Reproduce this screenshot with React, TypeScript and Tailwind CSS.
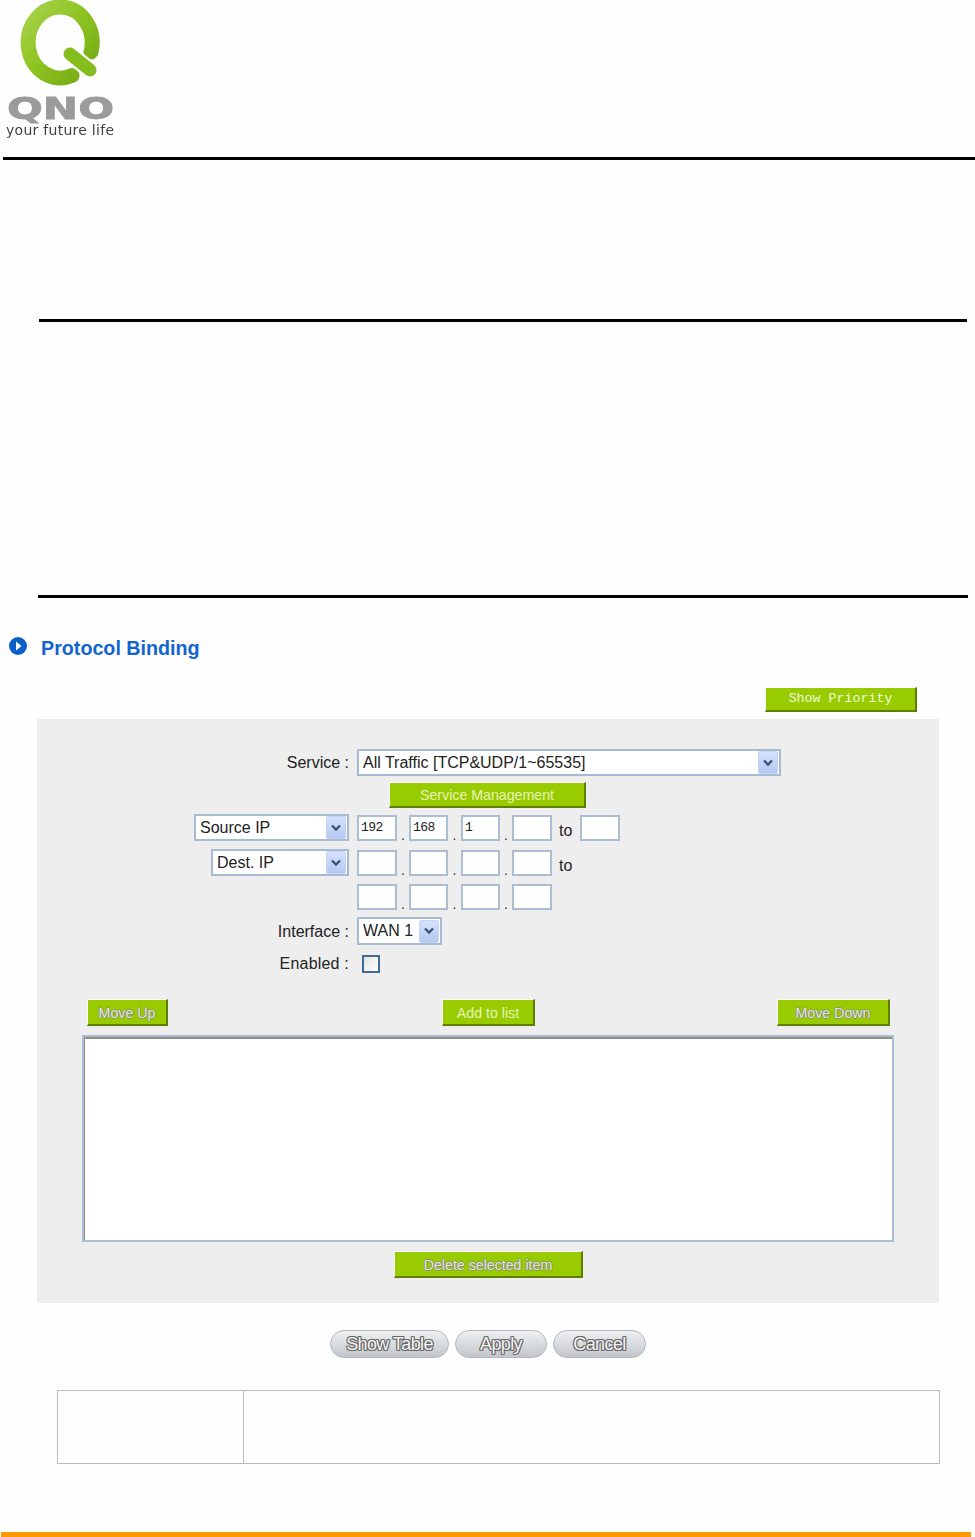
import React from "react";

const sans = "font-['Liberation_Sans',Arial,sans-serif]";

function Chevron({ className }: { className: string }) {
  return (
    <span
      className={`flex items-center justify-center rounded-[2px] border border-[#c4d4f4] bg-gradient-to-b from-[#d6e2fb] to-[#b4c8f2] ${className}`}
    >
      <svg width="12" height="8" viewBox="0 0 12 8" fill="none">
        <path d="M2 1.5 L6 5.5 L10 1.5" stroke="#3d5378" strokeWidth="2.4" />
      </svg>
    </span>
  );
}

function Select({ text, className }: { text: string; className: string }) {
  return (
    <div
      className={`flex items-center justify-between border-2 border-[#a6bad2] bg-white pl-[4px] pr-[1px] text-[16px] text-[#222] ${className}`}
    >
      <span className="whitespace-nowrap">{text}</span>
      <Chevron className="h-[23px] w-[20px]" />
    </div>
  );
}

function Box({ value = "", className = "w-[40px]" }: { value?: string; className?: string }) {
  return (
    <div
      className={`flex h-[26px] items-center border-2 border-[#a9bdd3] bg-white pl-[2px] font-['Liberation_Mono',monospace] text-[13px] tracking-[-0.5px] text-[#222] ${className}`}
    >
      {value}
    </div>
  );
}

function Dot({ className = "w-[12px]" }: { className?: string }) {
  return <span className={`h-[26px] pt-[11px] text-center text-[14px] leading-[18px] text-[#333] ${className}`}>.</span>;
}

function IpBoxes({ values = ["", "", "", ""] }: { values?: string[] }) {
  return (
    <>
      <Box value={values[0]} />
      <Dot />
      <Box value={values[1]} className="w-[39px]" />
      <Dot className="w-[13px]" />
      <Box value={values[2]} className="w-[39px]" />
      <Dot />
      <Box value={values[3]} />
    </>
  );
}

function GreenButton({
  children,
  className,
}: {
  children: React.ReactNode;
  className: string;
}) {
  return (
    <div
      className={`flex h-[27px] items-center justify-center border-t border-l border-t-white border-l-white border-r-2 border-b-2 border-r-[#5f7d00] border-b-[#5f7d00] bg-[#99cc00] ${className}`}
    >
      {children}
    </div>
  );
}

const disabledText =
  "text-[14.2px] text-[#e2e2e2] [text-shadow:1px_0_0_#8a9a5a,-1px_0_0_#8a9a5a,0_1px_0_#8a9a5a,0_-1px_0_#8a9a5a] whitespace-nowrap";

function Pill({ text, className }: { text: string; className: string }) {
  return (
    <div
      className={`flex h-[28px] items-center justify-center rounded-full border border-[#b4b8bc] bg-gradient-to-b from-[#eef0f2] via-[#d8dbdf] to-[#c2c6cb] text-[18px] tracking-[-0.6px] text-[#f4f4f4] [text-shadow:1px_0_0_#666,-1px_0_0_#666,0_1px_0_#666,0_-1px_0_#666,1px_1px_0_#777,-1px_-1px_0_#777,1px_-1px_0_#777,-1px_1px_0_#777] ${className}`}
    >
      {text}
    </div>
  );
}

function Logo() {
  return (
    <svg width="125" height="157" viewBox="0 0 125 157" className="blur-[0.4px]">
      <defs>
        <linearGradient id="qGreen" x1="0" y1="0" x2="1" y2="1">
          <stop offset="0" stopColor="#a6d24a" />
          <stop offset="0.5" stopColor="#8cc220" />
          <stop offset="1" stopColor="#74aa14" />
        </linearGradient>
      </defs>
      <path
        d="M91 52 A32 35.5 0 1 0 72 75.5"
        fill="none"
        stroke="url(#qGreen)"
        strokeWidth="15"
        strokeLinecap="round"
      />
      <path d="M70 54 L90 70" fill="none" stroke="white" strokeWidth="17" strokeLinecap="round" />
      <path d="M70 54 L90 70" fill="none" stroke="#86bd1e" strokeWidth="13" strokeLinecap="round" />
      <text
        x="7"
        y="119"
        textLength="107"
        lengthAdjust="spacingAndGlyphs"
        fontFamily="DejaVu Sans"
        fontWeight="700"
        fontSize="31"
        fill="#9b9b9b"
        stroke="#9b9b9b"
        strokeWidth="0.8"
      >
        QNO
      </text>
      <text x="6" y="135" textLength="108" fontFamily="DejaVu Sans" fontSize="14" fill="#3f3f3f">
        your future life
      </text>
    </svg>
  );
}

export default function App() {
  return (
    <div className={`flex h-[1537px] w-[975px] flex-col overflow-hidden bg-[#fefefe] ${sans}`}>
      <div className="h-[157px] pl-0">
        <Logo />
      </div>
      <div className="ml-[3px] h-[3px] w-[972px] bg-black" />
      <div className="ml-[39px] mt-[159px] h-[3px] w-[928px] bg-black" />
      <div className="ml-[38px] mt-[273px] h-[3px] w-[930px] bg-black" />

      <div className="ml-[9px] mt-[38px] flex h-[22px] items-center">
        <svg width="18" height="18" viewBox="0 0 18 18" className="mb-[3px]">
          <circle cx="9" cy="9" r="9" fill="#0b5fc6" />
          <path d="M7 4.5 L12.5 9 L7 13.5 Z" fill="white" />
        </svg>
        <span className="ml-[14px] pt-[3px] text-[19.7px] font-bold text-[#1265cf]">Protocol Binding</span>
      </div>

      <div className="mt-[29px] flex justify-end pr-[58px]">
        <div className="flex h-[25px] w-[152px] items-center justify-center border-t border-l border-t-white border-l-white border-r-2 border-b-2 border-r-[#5f7d00] border-b-[#5f7d00] bg-[#99cc00] font-['Liberation_Mono',monospace] text-[13.3px] text-[#f2f7dc]">
          Show Priority
        </div>
      </div>

      <div className="ml-[37px] mt-[7px] h-[584px] w-[902px] bg-[#eeeeee] pt-[30px] text-[16px] text-[#222]">
        <div className="flex h-[27px] items-center">
          <div className="w-[312px] pt-[1px] text-right">Service :</div>
          <Select text="All Traffic [TCP&UDP/1~65535]" className="ml-[8px] h-[27px] w-[424px]" />
        </div>

        <GreenButton className="ml-[352px] mt-[6px] !h-[26px] w-[197px] pt-[2px]">
          <span className="text-[14.2px] text-[#e6f3b8]">Service Management</span>
        </GreenButton>

        <div className="mt-[6px] flex h-[27px] items-center">
          <div className="flex w-[312px] justify-end">
            <Select text="Source IP" className="h-[27px] w-[155px]" />
          </div>
          <div className="ml-[8px] flex items-center">
            <IpBoxes values={["192", "168", "1", ""]} />
            <span className="ml-[7px] mr-[8px] pt-[7px]">to</span>
            <Box />
          </div>
        </div>

        <div className="mt-[8px] flex h-[27px] items-center">
          <div className="flex w-[312px] justify-end">
            <Select text="Dest. IP" className="h-[27px] w-[138px]" />
          </div>
          <div className="ml-[8px] flex items-center">
            <IpBoxes />
            <span className="ml-[7px] pt-[7px]">to</span>
          </div>
        </div>

        <div className="ml-[320px] mt-[8px] flex items-center">
          <IpBoxes />
        </div>

        <div className="mt-[7px] flex h-[28px] items-center">
          <div className="w-[312px] pt-[1px] text-right">Interface :</div>
          <Select text="WAN 1" className="ml-[8px] h-[28px] w-[85px]" />
        </div>

        <div className="mt-[10px] flex h-[18px] items-center">
          <div className="w-[312px] text-right tracking-[0.2px]">Enabled :</div>
          <div className="ml-[13px] h-[18px] w-[18px] border-2 border-[#3f6b94] bg-gradient-to-br from-[#e4e4e0] to-white" />
        </div>

        <div className="mt-[26px] flex items-start pl-[50px]">
          <GreenButton className="w-[81px] pt-[4px]">
            <span className={disabledText}>Move Up</span>
          </GreenButton>
          <GreenButton className="ml-[274px] w-[93px] pt-[4px]">
            <span className="text-[14.2px] text-[#e6f3b8]">Add to list</span>
          </GreenButton>
          <GreenButton className="ml-[242px] w-[113px] pt-[4px]">
            <span className={disabledText}>Move Down</span>
          </GreenButton>
        </div>

        <div className="ml-[45px] mt-[9px] h-[207px] w-[812px] border-2 border-[#a9bdd3] bg-white">
          <div className="h-full w-full border-t-2 border-l border-t-[#8f8f88] border-l-[#8f8f88]" />
        </div>

        <GreenButton className="ml-[357px] mt-[9px] w-[189px] pt-[4px]">
          <span className={disabledText}>Delete selected item</span>
        </GreenButton>
      </div>

      <div className="ml-[330px] mt-[27px] flex gap-[6px]">
        <Pill text="Show Table" className="w-[119px]" />
        <Pill text="Apply" className="w-[92px]" />
        <Pill text="Cancel" className="w-[93px]" />
      </div>

      <div className="ml-[57px] mt-[32px] flex h-[74px] w-[883px] border border-[#bbbbbb]">
        <div className="w-[186px] border-r border-[#bbbbbb]" />
      </div>

      <div className="ml-[1px] mt-[68px] h-[5px] w-[970px] bg-[#ff9900]" />
    </div>
  );
}
